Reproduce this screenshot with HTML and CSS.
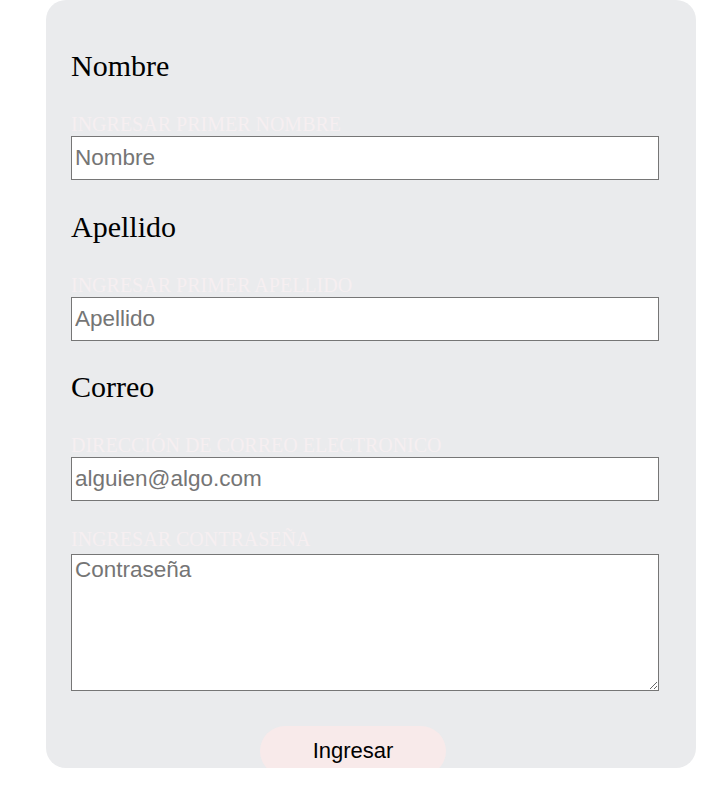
FILE: index.html
```html
<!DOCTYPE html>
<html lang="es">
<head>
<meta charset="utf-8">
<title>Registro</title>
<link rel="stylesheet" href="styles.css">
</head>
<body>
<form class="card">
  <h2 class="title">Nombre</h2>
  <label class="hint" for="nombre">Ingresar primer nombre</label>
  <input class="field field-first" id="nombre" type="text" placeholder="Nombre">

  <h2 class="title">Apellido</h2>
  <label class="hint" for="apellido">Ingresar primer apellido</label>
  <input class="field" id="apellido" type="text" placeholder="Apellido">

  <h2 class="title">Correo</h2>
  <label class="hint" for="correo">Dirección de correo electronico</label>
  <input class="field field-last" id="correo" type="email" placeholder="alguien@algo.com">

  <label class="hint hint-pass" for="pass">Ingresar contraseña</label>
  <textarea class="area" id="pass" placeholder="Contraseña"></textarea>

  <button class="btn" type="button">Ingresar</button>
</form>
</body>
</html>
```
FILE: styles.css
```css
html, body {
  margin: 0;
  padding: 0;
  background: #ffffff;
}

.card {
  box-sizing: border-box;
  margin-left: 46px;
  width: 650px;
  height: 768px;
  padding: 49px 37px 0 25px;
  background: #eaebed;
  border-radius: 20px;
  display: flex;
  flex-direction: column;
  align-items: flex-start;
  overflow: visible;
}

.title {
  margin: 0 0 31px 0;
  font-family: "Liberation Serif", "Times New Roman", serif;
  font-size: 30px;
  font-weight: normal;
  line-height: 33px;
  color: #000;
}

.hint {
  display: block;
  margin: 0 0 1px 0;
  font-family: "Liberation Serif", "Times New Roman", serif;
  font-size: 20px;
  line-height: 22px;
  text-transform: uppercase;
  color: #f6eff1;
}

.hint-pass {
  margin-bottom: 4px;
}

.field {
  box-sizing: border-box;
  display: block;
  flex: none;
  width: 588px;
  height: 44px;
  margin: 0 0 29px 0;
  padding: 1px 3px;
  border: 1px solid #767676;
  border-radius: 0;
  background: #fff;
  font-family: "Liberation Sans", Arial, sans-serif;
  font-size: 22.5px;
  color: #000;
}

.field-first {
  margin-bottom: 30px;
}

.field-last {
  margin-bottom: 27px;
}

.field::placeholder,
.area::placeholder {
  color: #757575;
  opacity: 1;
}

.area {
  box-sizing: border-box;
  display: block;
  flex: none;
  width: 588px;
  height: 137px;
  margin: 0;
  padding: 2px 3px;
  border: 1px solid #767676;
  border-radius: 0;
  background: #fff;
  font-family: "Liberation Sans", Arial, sans-serif;
  font-size: 22.5px;
}

.btn {
  margin: 35px 0 0 189px;
  width: 186px;
  height: 50px;
  flex: none;
  border: none;
  border-radius: 25px;
  background: #f8eaea;
  font-family: "Liberation Sans", Arial, sans-serif;
  font-size: 22px;
  color: #000;
  cursor: pointer;
}
```
